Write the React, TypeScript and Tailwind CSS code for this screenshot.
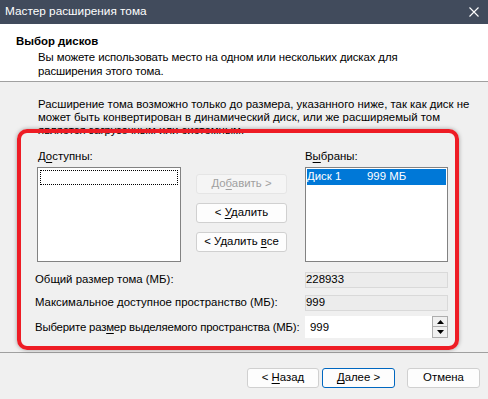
import React from "react";

const U = ({ children }: { children: React.ReactNode }) => (
  <span className="underline underline-offset-2">{children}</span>
);

function Btn({
  children,
  disabled,
  primary,
  className = "",
}: {
  children: React.ReactNode;
  disabled?: boolean;
  primary?: boolean;
  className?: string;
}) {
  return (
    <div
      className={
        "flex h-[20px] items-center justify-center rounded-[3px] border " +
        (disabled
          ? "border-[#e5e5e5] bg-[#f5f5f5] text-[#a0a0a0] "
          : primary
          ? "border-[#0067c0] bg-[#fdfdfd] text-black "
          : "border-[#d0d0d0] bg-[#fdfdfd] text-black ") +
        className
      }
    >
      <span className="whitespace-pre">{children}</span>
    </div>
  );
}

export default function App() {
  return (
    <div
      className="relative flex h-[399px] w-[488px] flex-col overflow-hidden whitespace-nowrap bg-[#f0f0f0] text-[11.4px] text-black"
      style={{ fontFamily: '"Liberation Sans", Arial, sans-serif' }}
    >
      {/* Title bar */}
      <div className="flex h-[24px] shrink-0 items-center justify-between bg-[#414b5c] pl-[5px] pr-[8px] text-white">
        <span className="text-[11.8px] leading-none">Мастер расширения тома</span>
        <svg width="10" height="10" viewBox="0 0 10 10" className="mr-[1px]">
          <path d="M0.5 0.5 L9.5 9.5 M9.5 0.5 L0.5 9.5" stroke="white" strokeWidth="1.1" />
        </svg>
      </div>

      {/* Header */}
      <div className="h-[58px] shrink-0 border-b border-[#a0a0a0] bg-white pl-[16px] pt-[10px]">
        <div className="font-bold leading-[15px]">Выбор дисков</div>
        <div className="pl-[22px] pt-[1px] leading-[14px] tracking-[-0.1px]">
          Вы можете использовать место на одном или нескольких дисках для
          <br />
          расширения этого тома.
        </div>
      </div>

      {/* Body */}
      <div className="flex h-[271px] shrink-0 flex-col border-b border-[#a0a0a0]">
        <div className="pl-[38px] pt-[16px] leading-[13px]">
          Расширение тома возможно только до размера, указанного ниже, так как диск не
          <br />
          может быть конвертирован в динамический диск, или же расширяемый том
          <br />
          является загрузочным или системным.
        </div>

        <div className="mt-[12px] flex pl-[37px]">
          {/* Available */}
          <div className="flex w-[144px] flex-col">
            <div className="pl-[1px] leading-[15px]">
              Д<U>о</U>ступны:
            </div>
            <div className="mt-[3px] h-[95px] border border-[#828282] bg-white p-[2px]">
              <div className="h-[15px] border border-dotted border-black" />
            </div>
          </div>

          {/* Buttons */}
          <div className="ml-[15px] flex w-[91px] flex-col gap-[9px] pt-[25px]">
            <Btn disabled>
              До<U>б</U>авить &gt;
            </Btn>
            <Btn>
              &lt; <U>У</U>далить
            </Btn>
            <Btn>
              &lt; Удалить <U>в</U>се
            </Btn>
          </div>

          {/* Selected */}
          <div className="ml-[18px] flex w-[143px] flex-col">
            <div className="leading-[15px]">
              В<U>ы</U>браны:
            </div>
            <div className="mt-[3px] h-[95px] border border-[#828282] bg-white p-[1px]">
              <div className="flex h-[16px] items-center bg-[#0078d7] text-white">
                <span className="w-[60px]">Диск 1</span>
                <span>999 МБ</span>
              </div>
            </div>
          </div>
        </div>

        {/* Size rows */}
        <div className="mt-[9px] flex flex-col gap-[6px] pl-[35px]">
          <div className="flex items-center">
            <span className="w-[270px]">Общий размер тома (МБ):</span>
            <div className="flex h-[16px] w-[143px] items-center border border-[#d9d9d9] bg-[#ececec] leading-none">
              228933
            </div>
          </div>
          <div className="flex items-center">
            <span className="w-[270px]">Максимальное доступное пространство (МБ):</span>
            <div className="flex h-[16px] w-[143px] items-center border border-[#d9d9d9] bg-[#ececec] leading-none">
              999
            </div>
          </div>
          <div className="-mt-[1px] flex items-center">
            <span className="w-[270px] whitespace-pre tracking-[-0.2px]">
              Выберите раз<U>м</U>ер выделяемого пространства (МБ):
            </span>
            <div className="flex h-[22px] w-[143px] items-center bg-white">
              <span className="flex-1 pl-[5px]">999</span>
              <div className="flex h-[22px] w-[16px] flex-col">
                <div className="flex h-[11px] items-center justify-center border border-[#adadad] bg-[#f0f0f0]">
                  <svg width="7" height="4" viewBox="0 0 7 4">
                    <path d="M3.5 0 L7 4 L0 4 Z" fill="black" />
                  </svg>
                </div>
                <div className="flex h-[11px] items-center justify-center border border-t-0 border-[#adadad] bg-[#f0f0f0]">
                  <svg width="7" height="4" viewBox="0 0 7 4">
                    <path d="M0 0 L7 0 L3.5 4 Z" fill="black" />
                  </svg>
                </div>
              </div>
            </div>
          </div>
        </div>
      </div>

      {/* Footer */}
      <div className="flex pl-[247px] pt-[15px]">
        <Btn className="w-[72px]">
          &lt; <U>Н</U>азад
        </Btn>
        <Btn primary className="ml-[3px] w-[73px]">
          <U>Д</U>алее &gt;
        </Btn>
        <Btn className="ml-[12px] w-[73px]">Отмена</Btn>
      </div>

      {/* Red annotation frame */}
      <div className="pointer-events-none absolute left-[17px] top-[129px] h-[221px] w-[442px] rounded-[10px] border-[4px] border-[#ee1c25] shadow-[0_0_4px_rgba(0,0,0,0.35)]" />
    </div>
  );
}
